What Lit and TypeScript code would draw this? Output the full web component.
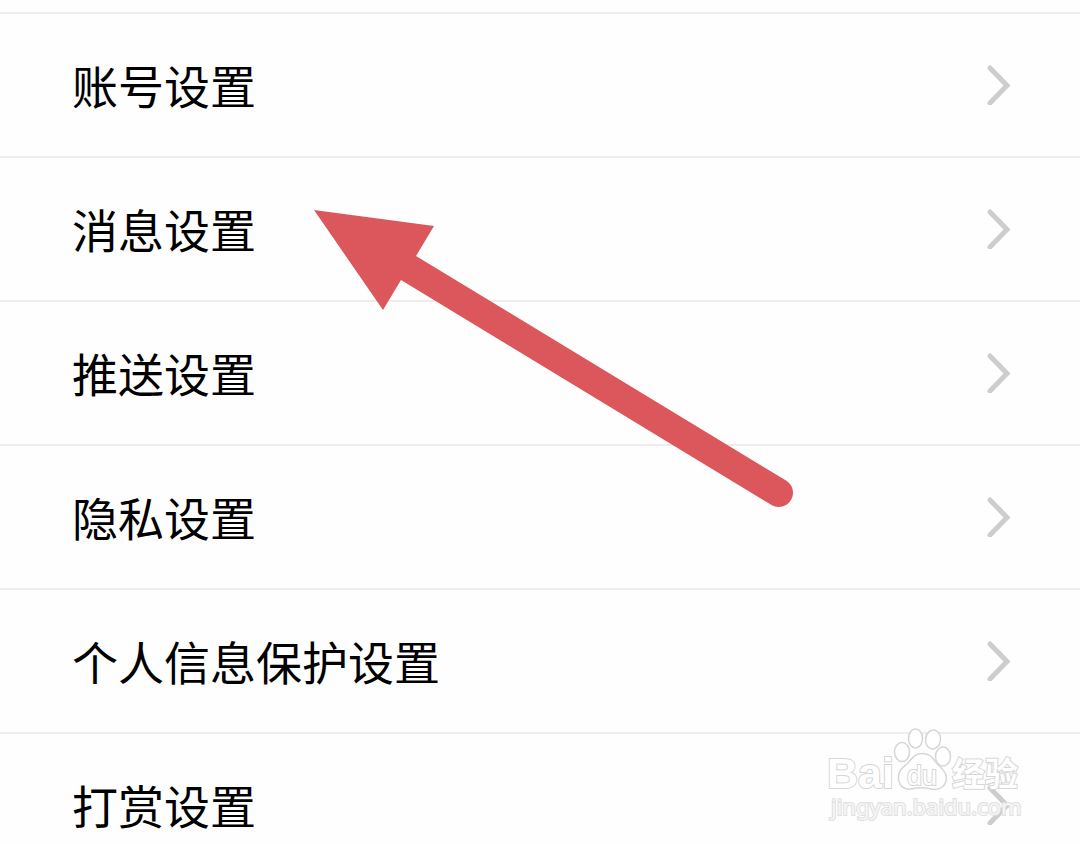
import { LitElement, html, css } from "lit";
import { customElement, property } from "lit/decorators.js";

@customElement("settings-row")
class SettingsRow extends LitElement {
  @property() label = "";

  static styles = css`
    :host {
      display: block;
    }
    .row {
      box-sizing: border-box;
      width: 100%;
      height: 144px;
      margin: 0;
      padding: 0 69px 0 72px;
      border: 0;
      border-top: 2px solid #ededed;
      background: #fefefe;
      display: flex;
      align-items: center;
      justify-content: space-between;
      color: #000;
      font: 400 46px/68px "Noto Sans CJK SC", sans-serif;
      text-align: left;
      cursor: pointer;
    }
    .label {
      padding-bottom: 2px;
    }
    .chevron {
      flex: none;
      width: 24px;
      height: 40px;
      fill: none;
      stroke: #cdcdcd;
      stroke-width: 5;
      stroke-linecap: round;
    }
  `;

  render() {
    return html`
      <button class="row" type="button">
        <span class="label">${this.label}</span>
        <svg class="chevron" viewBox="0 0 24 40" aria-hidden="true">
          <path d="M3 3 L20 20.5 L3 38" />
        </svg>
      </button>
    `;
  }
}

@customElement("pointer-arrow")
class PointerArrow extends LitElement {
  static styles = css`
    :host,
    svg {
      display: block;
    }
    path {
      fill: #db575b;
    }
  `;

  render() {
    return html`
      <svg width="480" height="300" viewBox="314 210 480 300" aria-hidden="true">
        <path
          d="M314 210 L434 226 L416 256 L786 480.5 A14 14 0 0 1 771.5 505 L401 280 L383 310 Z"
        />
      </svg>
    `;
  }
}

@customElement("site-watermark")
class SiteWatermark extends LitElement {
  static styles = css`
    :host,
    svg {
      display: block;
    }
    .mark {
      fill: #fff;
      stroke: #d6d6d6;
      stroke-width: 2;
      paint-order: stroke;
    }
    .paw {
      stroke-width: 1.5;
      paint-order: normal;
    }
    .latin {
      font: 700 43px "Liberation Sans", sans-serif;
    }
    .du {
      font: 400 27px "Liberation Sans", sans-serif;
    }
    .han {
      font: 700 33px "Noto Sans CJK SC", sans-serif;
    }
    .address {
      font: 400 22px "Noto Sans", sans-serif;
      fill-opacity: 0.7;
      stroke: #e0e0e0;
    }
  `;

  render() {
    return html`
      <svg width="200" height="100" viewBox="826 726 200 100" role="img" aria-label="Baidu 经验">
        <text class="mark latin" x="827" y="788">Bai</text>
        <g class="mark paw">
          <ellipse cx="902" cy="752" rx="7.5" ry="9.5" />
          <ellipse cx="915.5" cy="738.5" rx="7" ry="9.5" />
          <ellipse cx="933" cy="739.5" rx="7.5" ry="9.5" transform="rotate(8 933 739.5)" />
          <ellipse cx="943" cy="756.5" rx="7.5" ry="9.5" />
          <path
            d="M922 753.5 C914 753.5 912 759 908 763 C903 768 898 770 898.500 778 C899 786 904 790 911 789 C918 787.500 925 787.500 931 789 C940 791 946 786 946.500 778 C946.500 770 939 767 935 761 C932 756 928 753.500 922 753.500 Z"
          />
        </g>
        <text class="mark du" x="907" y="785">du</text>
        <text class="mark han" x="952" y="786">经验</text>
        <text class="mark address" x="831" y="815">jingyan.baidu.com</text>
      </svg>
    `;
  }
}

@customElement("app-root")
class AppRoot extends LitElement {
  private labels = ["账号设置", "消息设置", "推送设置", "隐私设置", "个人信息保护设置", "打赏设置"];

  static styles = css`
    :host {
      display: block;
      position: relative;
      height: 100vh;
      overflow: hidden;
      background: #fefefe;
    }
    .list {
      margin: 0;
      padding: 12px 0 0;
      list-style: none;
    }
    .arrow,
    .watermark {
      position: absolute;
      pointer-events: none;
    }
    .arrow {
      left: 314px;
      top: 210px;
    }
    .watermark {
      right: 54px;
      bottom: 18px;
    }
  `;

  render() {
    return html`
      <ul class="list">
        ${this.labels.map((label) => html`<li><settings-row .label=${label}></settings-row></li>`)}
      </ul>
      <pointer-arrow class="arrow"></pointer-arrow>
      <site-watermark class="watermark"></site-watermark>
    `;
  }
}
